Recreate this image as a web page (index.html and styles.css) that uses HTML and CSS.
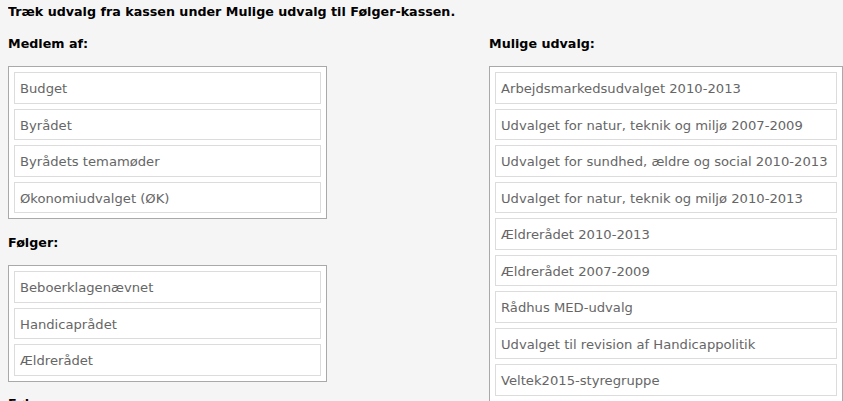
FILE: index.html
```html
<!DOCTYPE html>
<html lang="da">
<head>
<meta charset="utf-8">
<title>Udvalg</title>
<link rel="stylesheet" href="styles.css">
</head>
<body>
<p class="intro">Træk udvalg fra kassen under Mulige udvalg til Følger-kassen.</p>
<div class="columns">
  <div class="col col-left">
    <h2 class="label">Medlem af:</h2>
    <ul class="box">
      <li class="item">Budget</li>
      <li class="item">Byrådet</li>
      <li class="item">Byrådets temamøder</li>
      <li class="item">Økonomiudvalget (ØK)</li>
    </ul>
    <h2 class="label label-gap">Følger:</h2>
    <ul class="box">
      <li class="item">Beboerklagenævnet</li>
      <li class="item">Handicaprådet</li>
      <li class="item">Ældrerådet</li>
    </ul>
    <h2 class="label label-last">Følgere:</h2>
  </div>
  <div class="col col-right">
    <h2 class="label">Mulige udvalg:</h2>
    <ul class="box">
      <li class="item">Arbejdsmarkedsudvalget 2010-2013</li>
      <li class="item">Udvalget for natur, teknik og miljø 2007-2009</li>
      <li class="item">Udvalget for sundhed, ældre og social 2010-2013</li>
      <li class="item">Udvalget for natur, teknik og miljø 2010-2013</li>
      <li class="item">Ældrerådet 2010-2013</li>
      <li class="item">Ældrerådet 2007-2009</li>
      <li class="item">Rådhus MED-udvalg</li>
      <li class="item">Udvalget til revision af Handicappolitik</li>
      <li class="item">Veltek2015-styregruppe</li>
    </ul>
  </div>
</div>
</body>
</html>
```
FILE: styles.css
```css
html, body {
  background: #f5f5f5;
}
body {
  margin: 0 0 0 8px;
  font-family: "DejaVu Sans", Verdana, sans-serif;
  font-size: 13px;
  color: #000;
  overflow: hidden;
}
.intro {
  margin: 3px 0 0;
  font-size: 12.7px;
  font-weight: bold;
  line-height: 18px;
}
.columns {
  display: grid;
  grid-template-columns: 319px 354px;
  justify-content: space-between;
  width: 835px;
}
.label {
  margin: 14px 0 13px;
  font-size: 12.7px;
  font-weight: bold;
  line-height: 18px;
}
.label-gap {
  margin-top: 15px;
}
.label-last {
  margin-top: 13px;
}
.box {
  list-style: none;
  margin: 0;
  padding: 5px;
  background: #fff;
  border: 1px solid #a9a9a9;
  display: flex;
  flex-direction: column;
  gap: 5px;
}
.item {
  box-sizing: border-box;
  height: 31.5px;
  padding: 2px 5px 0;
  border: 1px solid #dcdcdc;
  background: #fff;
  color: #666;
  font-size: 13.15px;
  line-height: 27.5px;
  white-space: nowrap;
}
```
